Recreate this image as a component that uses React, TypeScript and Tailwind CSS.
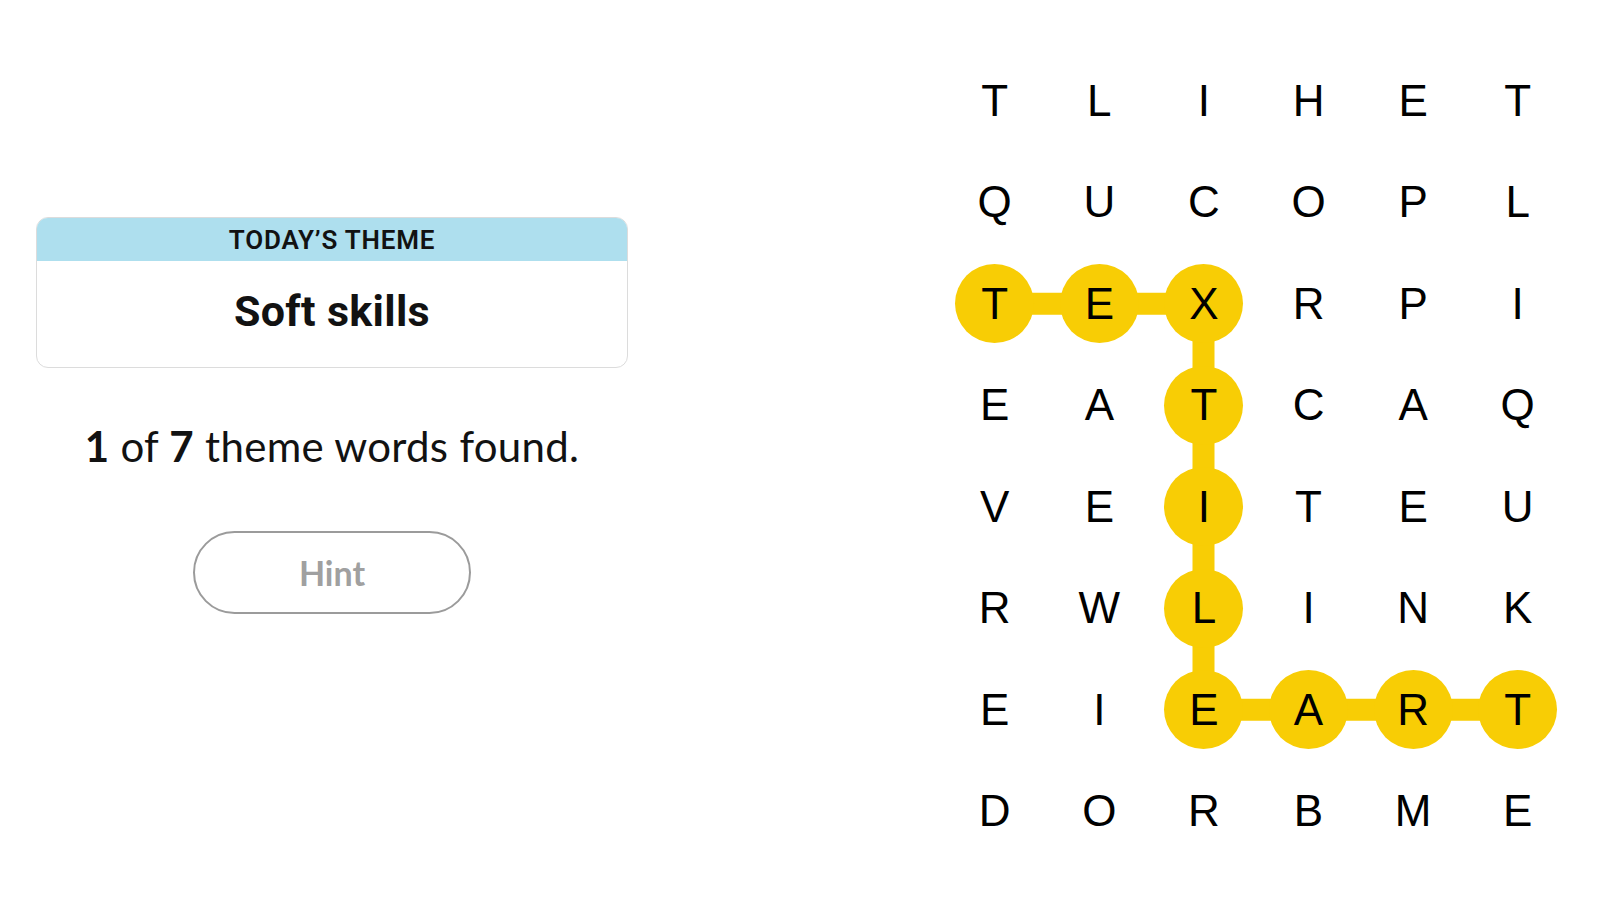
import React from 'react';

const ROWS = [
  'TLIHET',
  'QUCOPL',
  'TEXRPI',
  'EATCAQ',
  'VEITEU',
  'RWLINK',
  'EIEART',
  'DORBME',
];

// spangram path, [row, col]
const PATH: [number, number][] = [
  [2, 0], [2, 1], [2, 2], [3, 2], [4, 2], [5, 2], [6, 2], [6, 3], [6, 4], [6, 5],
];

const CELL_W = 104.6;
const CELL_H = 101.5;

const isFound = (r: number, c: number) => PATH.some(([pr, pc]) => pr === r && pc === c);

const Board: React.FC = () => {
  const points = PATH.map(([r, c]) => `${c * CELL_W + CELL_W / 2},${r * CELL_H + CELL_H / 2}`).join(' ');
  return (
    <div className="relative">
      {/* connector line between found letters */}
      <svg className="absolute inset-0 pointer-events-none" width={CELL_W * 6} height={CELL_H * 8}>
        <polyline points={points} fill="none" stroke="#f8cd05" strokeWidth={22} strokeLinejoin="miter" />
      </svg>
      <div className="relative grid grid-cols-[repeat(6,104.6px)] grid-rows-[repeat(8,101.5px)]">
        {ROWS.map((row, r) =>
          row.split('').map((ch, c) => (
            <div key={`${r}-${c}`} className="flex items-center justify-center">
              <div
                className={`w-[79px] h-[79px] rounded-full flex items-center justify-center text-[44px] leading-none text-black font-['Liberation_Sans',Arial,sans-serif] ${isFound(r, c) ? 'bg-[#f8cd05]' : ''}`}
              >
                {ch}
              </div>
            </div>
          ))
        )}
      </div>
    </div>
  );
};

export default function App() {
  return (
    <div className="flex w-[1600px] h-[900px] bg-white overflow-hidden">
      {/* Left: theme + progress */}
      <div className="ml-[36px] w-[592px] pt-[217px] flex flex-col items-center">
        <div className="w-full h-[151px] rounded-xl border border-[#dcdcdc] overflow-hidden flex flex-col">
          <div className="h-[43px] bg-[#aedfee] flex items-center justify-center">
            <span className="font-['Roboto',sans-serif] font-semibold text-[26px] tracking-[0.8px] text-[#121212] leading-none">
              TODAY’S THEME
            </span>
          </div>
          <div className="flex-1 flex items-center justify-center pb-[6px]">
            <span className="font-['Roboto',sans-serif] font-bold text-[43px] tracking-[0.3px] text-[#121212] leading-none">
              Soft skills
            </span>
          </div>
        </div>

        <p className="mt-[53px] font-['Lato',sans-serif] text-[42px] tracking-[0.3px] leading-[1.2] text-[#121212]">
          <span className="font-bold">1</span> of <span className="font-bold">7</span> theme words found.
        </p>

        <button className="mt-[60px] w-[278px] h-[83px] rounded-full border-2 border-[#9b9b9b] bg-white flex items-center justify-center">
          <span className="font-['Lato',sans-serif] font-bold text-[34px] leading-none text-[#a0a0a0]">Hint</span>
        </button>
      </div>

      {/* Right: letter board */}
      <div className="ml-auto mr-[30px] mt-[50px]">
        <Board />
      </div>
    </div>
  );
}
